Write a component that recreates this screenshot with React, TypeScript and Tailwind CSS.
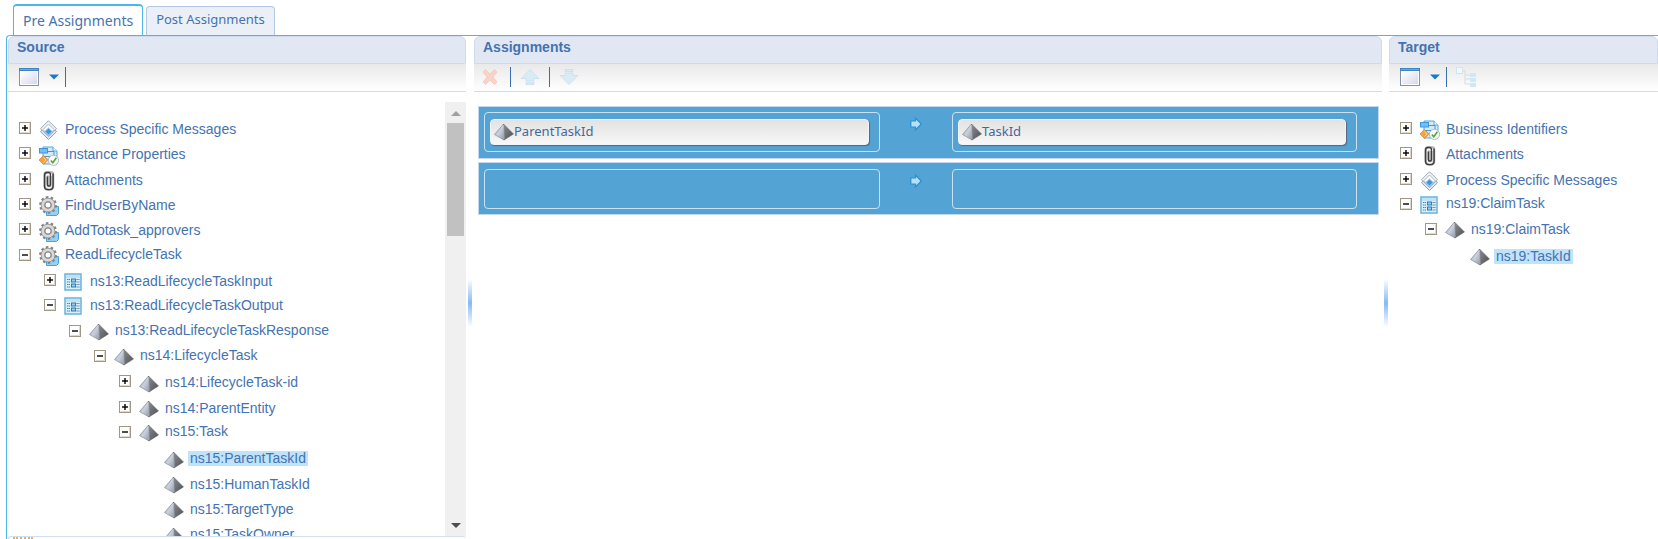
import { useState } from "react";
import clsx from "clsx";

type IconKind = "message" | "properties" | "clip" | "gear" | "variable" | "pyramid";

type TreeNode = {
  label: string;
  icon: IconKind;
  level: number;
  state: "collapsed" | "expanded" | "leaf";
};

const SOURCE_NODES: TreeNode[] = [
  { label: "Process Specific Messages", icon: "message", level: 0, state: "collapsed" },
  { label: "Instance Properties", icon: "properties", level: 0, state: "collapsed" },
  { label: "Attachments", icon: "clip", level: 0, state: "collapsed" },
  { label: "FindUserByName", icon: "gear", level: 0, state: "collapsed" },
  { label: "AddTotask_approvers", icon: "gear", level: 0, state: "collapsed" },
  { label: "ReadLifecycleTask", icon: "gear", level: 0, state: "expanded" },
  { label: "ns13:ReadLifecycleTaskInput", icon: "variable", level: 1, state: "collapsed" },
  { label: "ns13:ReadLifecycleTaskOutput", icon: "variable", level: 1, state: "expanded" },
  { label: "ns13:ReadLifecycleTaskResponse", icon: "pyramid", level: 2, state: "expanded" },
  { label: "ns14:LifecycleTask", icon: "pyramid", level: 3, state: "expanded" },
  { label: "ns14:LifecycleTask-id", icon: "pyramid", level: 4, state: "collapsed" },
  { label: "ns14:ParentEntity", icon: "pyramid", level: 4, state: "collapsed" },
  { label: "ns15:Task", icon: "pyramid", level: 4, state: "expanded" },
  { label: "ns15:ParentTaskId", icon: "pyramid", level: 5, state: "leaf" },
  { label: "ns15:HumanTaskId", icon: "pyramid", level: 5, state: "leaf" },
  { label: "ns15:TargetType", icon: "pyramid", level: 5, state: "leaf" },
  { label: "ns15:TaskOwner", icon: "pyramid", level: 5, state: "leaf" },
];

const TARGET_NODES: TreeNode[] = [
  { label: "Business Identifiers", icon: "properties", level: 0, state: "collapsed" },
  { label: "Attachments", icon: "clip", level: 0, state: "collapsed" },
  { label: "Process Specific Messages", icon: "message", level: 0, state: "collapsed" },
  { label: "ns19:ClaimTask", icon: "variable", level: 0, state: "expanded" },
  { label: "ns19:ClaimTask", icon: "pyramid", level: 1, state: "expanded" },
  { label: "ns19:TaskId", icon: "pyramid", level: 2, state: "leaf" },
];

const ASSIGNMENTS = [
  { id: 1, from: "ParentTaskId", to: "TaskId" },
  { id: 2, from: "", to: "" },
];

const INDENT = ["pl-[11px]", "pl-[36px]", "pl-[61px]", "pl-[86px]", "pl-[111px]", "pl-[136px]"];

const PyramidIcon = () => (
  <svg width="20" height="18" viewBox="0 0 20 18" className="shrink-0">
    <defs>
      <linearGradient id="pyrLeft" x1="0" y1="0" x2="1" y2="1">
        <stop offset="0" stopColor="#8e939d" />
        <stop offset="0.5" stopColor="#c9d0de" />
        <stop offset="1" stopColor="#9299a6" />
      </linearGradient>
      <linearGradient id="pyrRight" x1="0" y1="0" x2="1" y2="1">
        <stop offset="0" stopColor="#8b8d91" />
        <stop offset="1" stopColor="#4c4e52" />
      </linearGradient>
    </defs>
    <path d="M9.5 1 L0.5 11.5 L10 17 Z" fill="url(#pyrLeft)" stroke="#8a8e96" strokeWidth="0.7" />
    <path d="M9.5 1 L19.5 11 L10 17 Z" fill="url(#pyrRight)" stroke="#606368" strokeWidth="0.5" />
    <path d="M9.5 2 L10 16" stroke="#d9deea" strokeWidth="0.6" />
  </svg>
);

const GearIcon = () => (
  <svg width="20" height="20" viewBox="0 0 20 20" className="shrink-0">
    <path d="M11 10.5h8.5v7l-2 2H7.5v-5z" fill="#92d0f5" stroke="#4aa0d8" />
    <circle cx="9" cy="9" r="7.8" fill="none" stroke="#858585" strokeWidth="2.2" strokeDasharray="2.6 2.3" />
    <circle cx="9" cy="9" r="5.2" fill="#fff" stroke="#8b8b8b" strokeWidth="4.2" />
    <circle cx="9" cy="9" r="5.2" fill="none" stroke="#d8d8d8" strokeWidth="2.8" />
    <circle cx="9" cy="9" r="3" fill="#fff" stroke="#8b8b8b" />
  </svg>
);

const MessageIcon = () => (
  <svg width="20" height="20" viewBox="0 0 20 20" className="shrink-0">
    <path d="M9.5 3.5 L17.5 11.7 L9.5 19.5 L1.5 11.7 Z" fill="#e4eaf1" stroke="#8f9dac" />
    <path d="M9.5 0.7 L17.5 8.7 L9.5 16.7 L1.5 8.7 Z" fill="#f0f4f8" stroke="#9aa7b4" />
    <path d="M9.5 4 L15 9.5 L9.5 15.5 L4 9.5 Z" fill="#fff" stroke="#a9b5c1" />
    <path d="M9.5 8 L13.2 11.5 L9.5 15 L5.8 11.5 Z" fill="#3398e8" stroke="#9bd0f6" />
  </svg>
);

const PropertiesIcon = () => (
  <svg width="20" height="20" viewBox="0 0 20 20" className="shrink-0">
    <path d="M4 1h10l4 4v13H4z" fill="#d4e9fa" stroke="#58a5df" />
    <path d="M14 1v4h4" fill="#fff" stroke="#58a5df" />
    <path d="M9 5.5h6v5H5v2" fill="none" stroke="#4b97d3" />
    <rect x="0.5" y="2.5" width="8" height="4.5" fill="#72c0f3" stroke="#3e97d8" />
    <path d="M4.5 9.5 L9 14 L4.5 18.5 L0 14 Z" fill="#f4a340" stroke="#d8852a" strokeWidth="0.7" />
    <path d="M4.5 11.5 L7 14 L4.5 16.5" fill="none" stroke="#ffd99c" />
    <circle cx="14.5" cy="14.3" r="5.1" fill="#fbfbfb" stroke="#b5b8bc" />
    <path d="M11.8 14.5l2 2.3 3.6-5" fill="none" stroke="#51a632" strokeWidth="1.6" />
  </svg>
);

const ClipIcon = () => (
  <svg width="20" height="20" viewBox="0 0 20 20" className="shrink-0" fill="none">
    <path
      d="M8.7 4.5v9.2a1.4 1.4 0 0 0 2.8 0V5M5.7 15V3.2C5.7 2 6.5 1.2 7.7 1.2h4.1c1.4 0 2.3 .9 2.3 2.3V15c0 2.2-1.4 3.6-3.5 3.6H9.2c-2.1 0-3.5-1.4-3.5-3.6z"
      stroke="#b9b9b9"
      strokeWidth="2.4"
    />
    <path
      d="M8.4 5.5v8a1.5 1.5 0 0 0 3 0V3.5c0-1.3-.8-2-2-2H8.2c-1.6 0-2.7 1-2.7 2.7V15c0 2.2 1.4 3.6 3.5 3.6h1.6c2.1 0 3.5-1.4 3.5-3.6V2.5"
      stroke="#3d3d3d"
      strokeWidth="1.4"
    />
  </svg>
);

const VariableIcon = () => (
  <svg width="20" height="18" viewBox="0 0 20 18" className="shrink-0">
    <rect x="1" y="1" width="16" height="16" fill="#d9effb" stroke="#72b7df" strokeWidth="1.6" />
    <path d="M2 2h14v3H2z" fill="#bfe2f6" />
    <path d="M3 6.5h3M3 9h3M3 11.5h3M3 14h3M12.5 6.5h3M12.5 9h3M12.5 11.5h3M12.5 14h3" stroke="#4f7f9e" strokeWidth="1.1" strokeDasharray="1.3 0.5" />
    <rect x="7.5" y="6" width="4" height="3" fill="#8fd0f5" stroke="#2d7db5" />
    <rect x="7.5" y="11" width="4" height="3" fill="#8fd0f5" stroke="#2d7db5" />
  </svg>
);

const WindowIcon = () => (
  <svg width="20" height="18" viewBox="0 0 20 18">
    <defs>
      <linearGradient id="winFill" x1="0" y1="0" x2="1" y2="1">
        <stop offset="0" stopColor="#fff" />
        <stop offset="1" stopColor="#d6d8ea" />
      </linearGradient>
    </defs>
    <rect x="0.5" y="0.5" width="19" height="17" fill="#fff" stroke="#8492a3" />
    <rect x="2" y="4" width="16" height="12" fill="url(#winFill)" />
    <rect x="0" y="0" width="20" height="3" fill="#3c82c4" />
    <rect x="1" y="1" width="18" height="1" fill="#67a9e0" />
  </svg>
);

const ArrowIcon = () => (
  <svg width="12" height="14" viewBox="0 0 12 14">
    <path d="M0.8 4H5.5V1L11.3 7 5.5 13V10H0.8z" fill="#b4e0fb" stroke="#2f8fd0" strokeWidth="1.2" />
  </svg>
);

const NodeIcon = ({ kind }: { kind: IconKind }) => {
  switch (kind) {
    case "message":
      return <MessageIcon />;
    case "properties":
      return <PropertiesIcon />;
    case "clip":
      return <ClipIcon />;
    case "gear":
      return <GearIcon />;
    case "variable":
      return <VariableIcon />;
    default:
      return <PyramidIcon />;
  }
};

const Toggle = ({ expanded, label }: { expanded: boolean; label: string }) => (
  <button type="button" aria-label={`Toggle ${label}`} className="block size-3 shrink-0 cursor-pointer">
    <svg width="12" height="12" viewBox="0 0 12 12">
      <rect x="0.5" y="0.5" width="11" height="11" fill="#fff" stroke="#a09884" />
      <path d="M1.5 10.5h9v-9" fill="none" stroke="#dcd8cc" />
      <path d="M3 6h6" stroke="#000" strokeWidth="1.4" />
      {!expanded && <path d="M6 3v6" stroke="#000" strokeWidth="1.4" />}
    </svg>
  </button>
);

type TreeProps = {
  label: string;
  nodes: TreeNode[];
  selected: string;
  onSelect: (label: string) => void;
};

const Tree = ({ label, nodes, selected, onSelect }: TreeProps) => (
  <ul role="tree" aria-label={label} className="min-w-0 flex-1 overflow-hidden pt-[13px]">
    {nodes.map((node, i) => (
      <li
        key={i}
        role="treeitem"
        aria-level={node.level + 1}
        className={clsx("flex h-[25px] items-center gap-2 nth-[3n+2]:h-[26px]", INDENT[node.level])}
      >
        {node.state === "leaf" ? (
          <span className="size-3 shrink-0" />
        ) : (
          <Toggle expanded={node.state === "expanded"} label={node.label} />
        )}
        <span className={clsx("flex items-center gap-1", node.state !== "expanded" && "pt-[3px]")}>
          <span className="flex w-5 shrink-0 pt-[2px]">
            <NodeIcon kind={node.icon} />
          </span>
          <button
            type="button"
            onClick={() => onSelect(node.label)}
            className={clsx(
              "cursor-pointer px-[2px] text-[14px] leading-[15px] whitespace-nowrap",
              selected === node.label && "bg-[#bfe3fb]"
            )}
          >
            {node.label}
          </button>
        </span>
      </li>
    ))}
  </ul>
);

const Separator = () => <span className="h-5 w-px bg-[#3a6fae]" />;

const ViewMenu = () => (
  <button type="button" aria-label="View menu" className="flex cursor-pointer items-center gap-[10px]">
    <WindowIcon />
    <svg width="10" height="6" viewBox="0 0 10 6">
      <path d="M0 0.5h10L5 5.5z" fill="#1a79c9" />
    </svg>
  </button>
);

const PanelTop = ({ title, children }: { title: string; children: React.ReactNode }) => (
  <>
    <h2 className="h-7 rounded-t-md border border-[#cfdbec] bg-[#e1e8f4] px-2 text-[14px] leading-5 font-bold">
      {title}
    </h2>
    <div className="flex h-7 items-center border-b border-[#d3dded] bg-linear-to-b from-[#e9e9e9] to-white px-[11px] pb-[2px]">
      {children}
    </div>
  </>
);

const Splitter = () => (
  <div role="separator" aria-orientation="vertical" className="flex flex-col items-center pt-[243px]">
    <span className="h-12 w-1 bg-linear-to-b from-white via-[#85b9f3] to-white" />
  </div>
);

const Scrollbar = () => (
  <div className="flex w-[21px] shrink-0 flex-col items-center bg-[#f0f0f0]">
    <svg width="10" height="21" viewBox="0 0 10 21">
      <path d="M0 14h10L5 9z" fill="#a0a0a0" />
    </svg>
    <span className="h-[113px] w-[17px] bg-[#c1c1c1]" />
    <svg width="10" height="14" viewBox="0 0 10 14" className="mt-auto">
      <path d="M0 1h10L5 6z" fill="#4d4d4d" />
    </svg>
  </div>
);

const Slot = ({ value }: { value: string }) => (
  <div className="h-10 min-w-0 rounded border border-[#cbe0f2] py-[6px] pr-[10px] pl-[5px]">
    {value && (
      <div className="flex h-[26px] items-center rounded border border-[#f4f4f8] bg-linear-to-b from-[#e2e2e2] to-[#f7f7f7] pl-[3px] font-['Noto_Sans',sans-serif] text-[13px] text-[#45689a] shadow-[1px_1px_1px_#56687c]">
        <PyramidIcon />
        {value}
      </div>
    )}
  </div>
);

export default function App() {
  const [tab, setTab] = useState("Pre Assignments");
  const [source, setSource] = useState("ns15:ParentTaskId");
  const [target, setTarget] = useState("ns19:TaskId");

  return (
    <div className="flex h-screen flex-col overflow-hidden bg-white pl-[6px] font-['Liberation_Sans',Arial,sans-serif] text-[#4473b0]">
      <div role="tablist" className="flex h-[35px] shrink-0 items-end gap-[3px] pl-[7px] font-['Noto_Sans',sans-serif]">
        {["Pre Assignments", "Post Assignments"].map((name) => (
          <button
            key={name}
            type="button"
            role="tab"
            aria-selected={tab === name}
            onClick={() => setTab(name)}
            className={clsx(
              "cursor-pointer rounded-t border border-b-0 px-[9px]",
              tab === name
                ? "h-[31px] border-t-2 border-[#4cb5ec] bg-white text-[14px]"
                : "h-[29px] border-[#b3c8e2] bg-[#ebf0f8] pb-[2px] text-[13px]"
            )}
          >
            {name}
          </button>
        ))}
      </div>

      <div className="grid min-h-0 flex-1 grid-cols-[458fr_8px_908fr_7px_269fr] rounded-tl border-t border-l border-[#4cb5ec] pl-px">
        <section className="flex min-h-0 min-w-0 flex-col">
          <PanelTop title="Source">
            <ViewMenu />
            <span className="ml-[6px] flex">
              <Separator />
            </span>
          </PanelTop>
          <div className="flex min-h-0 flex-1 pt-[10px]">
            <Tree label="Source" nodes={SOURCE_NODES} selected={source} onSelect={setSource} />
            <Scrollbar />
          </div>
          <div className="h-[3px] shrink-0 rounded-t border-t border-l border-[#cfdff0] pl-1">
            <div className="h-[2px] w-5 border-t-2 border-dotted border-[#f0b050]" />
          </div>
        </section>

        <Splitter />

        <section className="min-w-0">
          <PanelTop title="Assignments">
            <div className="-ml-1 flex items-center">
              <button type="button" disabled aria-label="Delete" className="pl-[1px]">
                <svg width="16" height="16" viewBox="0 0 16 16">
                  <path d="M1 3l2.5-2.5L8 5l4.5-4.5L15 3l-4 5 4 5-2.5 2.5L8 11l-4.5 4.5L1 13l4-5z" fill="#f9d3c8" stroke="#f5c3b5" strokeWidth="0.7" />
                </svg>
              </button>
              <span className="mr-[9px] ml-3 flex">
                <Separator />
              </span>
              <button type="button" disabled aria-label="Move up">
                <svg width="20" height="18" viewBox="0 0 20 18">
                  <path d="M10 1.5L19 10.5H14V13H6V10.5H1zM6 14.5h8v2H6z" fill="#d9ebf4" stroke="#c5deeb" strokeWidth="0.8" />
                </svg>
              </button>
              <span className="mr-[9px] ml-[9px] flex">
                <Separator />
              </span>
              <button type="button" disabled aria-label="Move down">
                <svg width="20" height="18" viewBox="0 0 20 18">
                  <path d="M10 16.5L19 7.5H14V5H6V7.5H1zM6 1.5h8v2H6z" fill="#d9ebf4" stroke="#c5deeb" strokeWidth="0.8" />
                </svg>
              </button>
            </div>
          </PanelTop>
          <div className="flex flex-col gap-[3px] pt-[14px] pr-[3px] pl-1">
            {ASSIGNMENTS.map((a) => (
              <div
                key={a.id}
                className="grid h-[53px] grid-cols-[396fr_72px_405fr_21px] border border-[#c5d8f0] bg-[#53a3d4] pt-[6px] pl-[5px] first:pt-[5px]"
              >
                <Slot value={a.from} />
                <span className="flex justify-center pt-[5px]">
                  <ArrowIcon />
                </span>
                <Slot value={a.to} />
              </div>
            ))}
          </div>
        </section>

        <Splitter />

        <section className="min-w-0">
          <PanelTop title="Target">
            <ViewMenu />
            <span className="mr-[9px] ml-[6px] flex">
              <Separator />
            </span>
            <button type="button" disabled aria-label="Show hierarchy">
              <svg width="20" height="20" viewBox="0 0 20 20">
                <path d="M7 4h2v13M9 8h5M9 12h5M9 17h5" fill="none" stroke="#d5dde2" />
                <rect x="0.5" y="0.5" width="6" height="6" fill="#eff8fd" stroke="#cbe5f3" />
                <path d="M14 6h6v4h-6zM14 11h6v4h-6zM14 16h6v4h-6z" fill="#d0e8f5" />
              </svg>
            </button>
          </PanelTop>
          <div className="flex pt-[10px]">
            <Tree label="Target" nodes={TARGET_NODES} selected={target} onSelect={setTarget} />
          </div>
        </section>
      </div>
    </div>
  );
}
